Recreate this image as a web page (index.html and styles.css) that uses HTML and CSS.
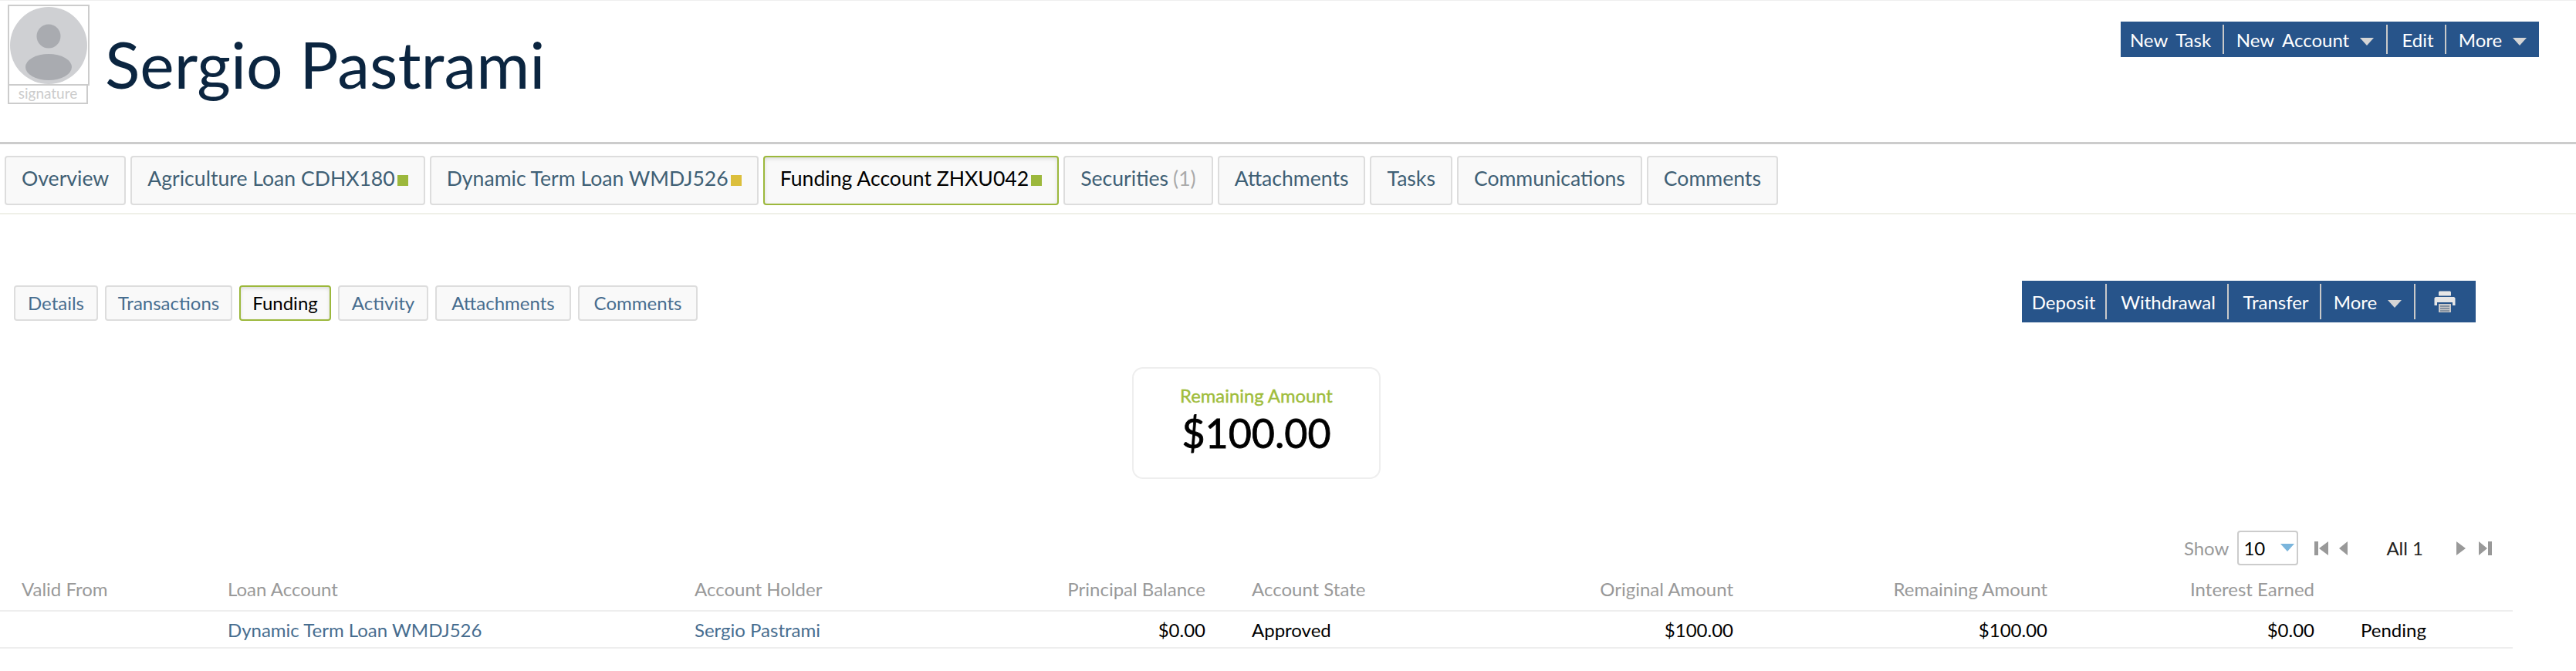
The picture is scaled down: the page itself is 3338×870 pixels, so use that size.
FILE: index.html
```html
<!DOCTYPE html>
<html lang="en">

<head>
    <meta charset="UTF-8">
    <meta name="viewport" content="width=device-width, initial-scale=1.0">
    <title>Sergio Pastrami</title>
    <link rel="stylesheet" href="styles.css">
</head>

<body>
    <header class="page-head">
        <div class="signature">
            <div class="photo">
                <svg width="102" height="101" viewBox="0 0 102 101">
                    <defs>
                        <clipPath id="face"><circle cx="51" cy="51" r="50"></circle></clipPath>
                    </defs>
                    <circle cx="51" cy="51" r="50" fill="#cfd0d3"></circle>
                    <g clip-path="url(#face)" fill="#a9abb0">
                        <circle cx="51" cy="39" r="15.5"></circle>
                        <ellipse cx="51" cy="79" rx="30" ry="17"></ellipse>
                    </g>
                </svg>
            </div>
            <div class="signature-label">signature</div>
        </div>
        <h1>Sergio Pastrami</h1>
        <div class="actions actions-top">
            <a class="w-task">New Task</a>
            <a class="w-account">New Account <i class="caret"></i></a>
            <a class="w-edit">Edit</a>
            <a class="w-more">More <i class="caret"></i></a>
        </div>
    </header>

    <nav class="tabs">
        <a class="tab">Overview</a>
        <a class="tab">Agriculture Loan CDHX180<i class="dot dot-green"></i></a>
        <a class="tab">Dynamic Term Loan WMDJ526<i class="dot dot-yellow"></i></a>
        <a class="tab active">Funding Account ZHXU042<i class="dot dot-green"></i></a>
        <a class="tab">Securities <span class="count">(1)</span></a>
        <a class="tab">Attachments</a>
        <a class="tab">Tasks</a>
        <a class="tab">Communications</a>
        <a class="tab">Comments</a>
    </nav>

    <main class="content">
        <div class="sub-row">
            <nav class="subtabs">
                <a class="subtab st-details">Details</a>
                <a class="subtab st-transactions">Transactions</a>
                <a class="subtab st-funding active">Funding</a>
                <a class="subtab st-activity">Activity</a>
                <a class="subtab st-attachments">Attachments</a>
                <a class="subtab st-comments">Comments</a>
            </nav>
            <div class="actions actions-sub">
                <a class="w-deposit">Deposit</a>
                <a class="w-withdrawal">Withdrawal</a>
                <a class="w-transfer">Transfer</a>
                <a class="w-more2">More <i class="caret"></i></a>
                <a class="w-print">
                    <svg width="28" height="30" viewBox="0 0 28 30">
                        <path d="M7 1.5h14l1 1v5H6v-5z" fill="#e6e6e6"></path>
                        <path d="M2 9h24l1.5 1.5V20H24v-4H4v4H.5v-9.500z" fill="#e6e6e6"></path>
                        <path d="M6 18h16v11H6z" fill="#c9c9c9"></path>
                        <path d="M8 21h12M8 24h12M8 27h12" stroke="#6f7f92" stroke-width="1.500"></path>
                    </svg>
                </a>
            </div>
        </div>

        <section class="summary">
            <div class="summary-label">Remaining Amount</div>
            <div class="summary-value">$100.00</div>
        </section>

        <div class="pager">
            <span class="pager-show">Show</span>
            <div class="pager-select">10<i class="caret-blue"></i></div>
            <svg class="pager-first" width="18" height="18" viewBox="0 0 18 18"><path d="M0 0h5v18H0zM18 0v18L6 9z" fill="#999"></path></svg>
            <svg class="pager-prev" width="11" height="18" viewBox="0 0 11 18"><path d="M11 0v18L0 9z" fill="#999"></path></svg>
            <span class="pager-all">All 1</span>
            <svg class="pager-next" width="12" height="18" viewBox="0 0 12 18"><path d="M0 0v18l12-9z" fill="#999"></path></svg>
            <svg class="pager-last" width="17" height="18" viewBox="0 0 17 18"><path d="M0 0v18l11-9zM12 0h5v18h-5z" fill="#999"></path></svg>
        </div>

        <table class="grid">
            <colgroup>
                <col class="c1"><col class="c2"><col class="c3"><col class="c4"><col class="c5">
                <col class="c6"><col class="c7"><col class="c8"><col class="c9">
            </colgroup>
            <thead>
                <tr>
                    <th>Valid From</th>
                    <th>Loan Account</th>
                    <th>Account Holder</th>
                    <th class="num">Principal Balance</th>
                    <th>Account State</th>
                    <th class="num">Original Amount</th>
                    <th class="num">Remaining Amount</th>
                    <th class="num">Interest Earned</th>
                    <th></th>
                </tr>
            </thead>
            <tbody>
                <tr>
                    <td></td>
                    <td><a>Dynamic Term Loan WMDJ526</a></td>
                    <td><a>Sergio Pastrami</a></td>
                    <td class="num">$0.00</td>
                    <td>Approved</td>
                    <td class="num">$100.00</td>
                    <td class="num">$100.00</td>
                    <td class="num">$0.00</td>
                    <td>Pending</td>
                </tr>
            </tbody>
        </table>
    </main>
</body>

</html>
```

FILE: styles.css
```css
body {
    font-family: Lato, "Open Sans", sans-serif;
    margin: 0;
    background-color: #fff;
    color: #000;
}

.page-head {
    display: flex;
    align-items: flex-start;
    height: 178px;
    padding: 5px 48px 0 10px;
    border-top: 1px solid #eee;
    border-bottom: 3px solid #ccc;
}

.signature {
    width: 106px;
}

.photo {
    width: 106px;
    height: 105px;
    border: 2px solid #ccc;
    box-sizing: border-box;
    display: flex;
    align-items: center;
    justify-content: center;
}

.signature-label {
    width: 104px;
    height: 24px;
    border: 2px solid #ccc;
    border-top: none;
    box-sizing: border-box;
    color: #ccc;
    font-size: 19px;
    line-height: 20px;
    text-align: center;
}

h1 {
    margin: 27px 0 0 20px;
    font-size: 84px;
    line-height: 100px;
    font-weight: 400;
    color: #0b2540;
    flex: 1;
}

.actions {
    display: flex;
    background-color: #27548a;
    color: #fff;
    font-size: 24px;
}

.actions a {
    display: flex;
    align-items: center;
    justify-content: center;
    gap: 14px;
    box-sizing: border-box;
    border-right: 2px solid #c9c9c9;
    white-space: nowrap;
}

.actions a:last-child {
    border-right: none;
}

.actions-top {
    margin-top: 22px;
    height: 46px;
    padding: 4px 0;
    box-sizing: border-box;
    word-spacing: 5px;
}

.actions-sub {
    height: 54px;
    padding: 4px 0;
    box-sizing: border-box;
}

.w-task { width: 134px; padding-right: 3px; }
.w-account { width: 212px; }
.w-edit { width: 76px; padding-left: 4px; }
.w-more { width: 120px; }

.w-deposit { width: 110px; }
.w-withdrawal { width: 158px; padding-left: 3px; }
.w-transfer { width: 120px; padding-left: 4px; }
.w-more2 { width: 122px; }
.w-print { width: 78px; padding-right: 3px; }

.caret {
    width: 0;
    height: 0;
    border-left: 9px solid transparent;
    border-right: 9px solid transparent;
    border-top: 10px solid #d5d5d5;
    margin-top: 6px;
}

.tabs {
    display: flex;
    gap: 6px;
    padding: 15px 0 10px 6px;
    border-bottom: 2px solid #eff0e8;
}

.tab {
    display: flex;
    align-items: center;
    gap: 3px;
    height: 64px;
    padding: 0 20px 6px;
    box-sizing: border-box;
    border: 2px solid #ddd;
    border-radius: 4px;
    background-color: #f9f9f9;
    color: #3f6075;
    font-size: 26.6px;
}

.tab.active {
    border-color: #9cb83c;
    color: #000;
    box-shadow: inset 0 2px 5px rgba(0, 0, 0, 0.12);
}

.dot {
    width: 14px;
    height: 14px;
    margin-top: 6px;
}

.dot-green {
    background-color: #9cb83c;
}

.dot-yellow {
    background-color: #dcbf3c;
}

.count {
    color: #aaa;
    margin-left: 3px;
}

.content {
    width: 3256px;
}

.sub-row {
    display: flex;
    justify-content: space-between;
    align-items: flex-start;
    margin-top: 86px;
    padding: 0 48px 0 18px;
}

.subtabs {
    display: flex;
    gap: 9px;
    margin-top: 6px;
}

.subtab {
    display: flex;
    align-items: center;
    justify-content: center;
    height: 46px;
    padding-bottom: 2px;
    box-sizing: border-box;
    border: 2px solid #ddd;
    border-radius: 4px;
    background-color: #f9f9f9;
    color: #476d8f;
    font-size: 24px;
}

.st-details { width: 109px; }
.st-transactions { width: 165px; }
.st-funding { width: 119px; }
.st-activity { width: 117px; }
.st-attachments { width: 176px; }
.st-comments { width: 155px; }

.subtab.active {
    border-color: #9cb83c;
    color: #000;
    box-shadow: inset 0 2px 4px rgba(0, 0, 0, 0.12);
}

.summary {
    width: 322px;
    height: 145px;
    margin: 58px auto 0;
    box-sizing: border-box;
    border: 2px solid #eee;
    border-radius: 14px;
    text-align: center;
    padding-top: 20px;
}

.summary-label {
    color: #a0bd3c;
    font-size: 23.8px;
    line-height: 30px;
    -webkit-text-stroke: 0.4px #a0bd3c;
}

.summary-value {
    font-size: 52px;
    line-height: 66px;
    -webkit-text-stroke: 0.8px #000;
}

.pager {
    display: flex;
    align-items: center;
    height: 45px;
    margin-top: 67px;
    padding-right: 27px;
    justify-content: flex-end;
    font-size: 24px;
}

.pager-show {
    color: #999;
    margin-right: 11px;
}

.pager-select {
    position: relative;
    width: 79px;
    height: 45px;
    box-sizing: border-box;
    border: 2px solid #ccc;
    border-radius: 4px;
    padding-left: 6px;
    line-height: 41px;
    margin-right: 21px;
}

.caret-blue {
    position: absolute;
    right: 3px;
    top: 15px;
    width: 0;
    height: 0;
    border-left: 9px solid transparent;
    border-right: 9px solid transparent;
    border-top: 10px solid #7ab5dc;
}

.pager-prev {
    margin: 0 50px 0 14px;
}

.pager-all {
    color: #222;
    margin-right: 43px;
}

.pager-last {
    margin-left: 17px;
}

.grid {
    width: 3256px;
    table-layout: fixed;
    border-collapse: collapse;
    font-size: 24px;
}

.c1 { width: 267px; }
.c2 { width: 605px; }
.c3 { width: 360px; }
.c4 { width: 362px; }
.c5 { width: 340px; }
.c6 { width: 344px; }
.c7 { width: 407px; }
.c8 { width: 346px; }
.c9 { width: 225px; }

th,
td {
    padding: 0 0 0 28px;
    text-align: left;
    font-weight: 400;
    white-space: nowrap;
}

th {
    height: 59px;
    box-sizing: border-box;
    color: #999;
    border-bottom: 2px solid #eee;
    padding-top: 3px;
}

td {
    height: 46px;
    border-bottom: 2px solid #eee;
}

th.num,
td.num {
    text-align: right;
    padding: 0 32px 0 0;
}

th.num {
    padding-top: 3px;
}

td a {
    color: #476d8f;
}
```
